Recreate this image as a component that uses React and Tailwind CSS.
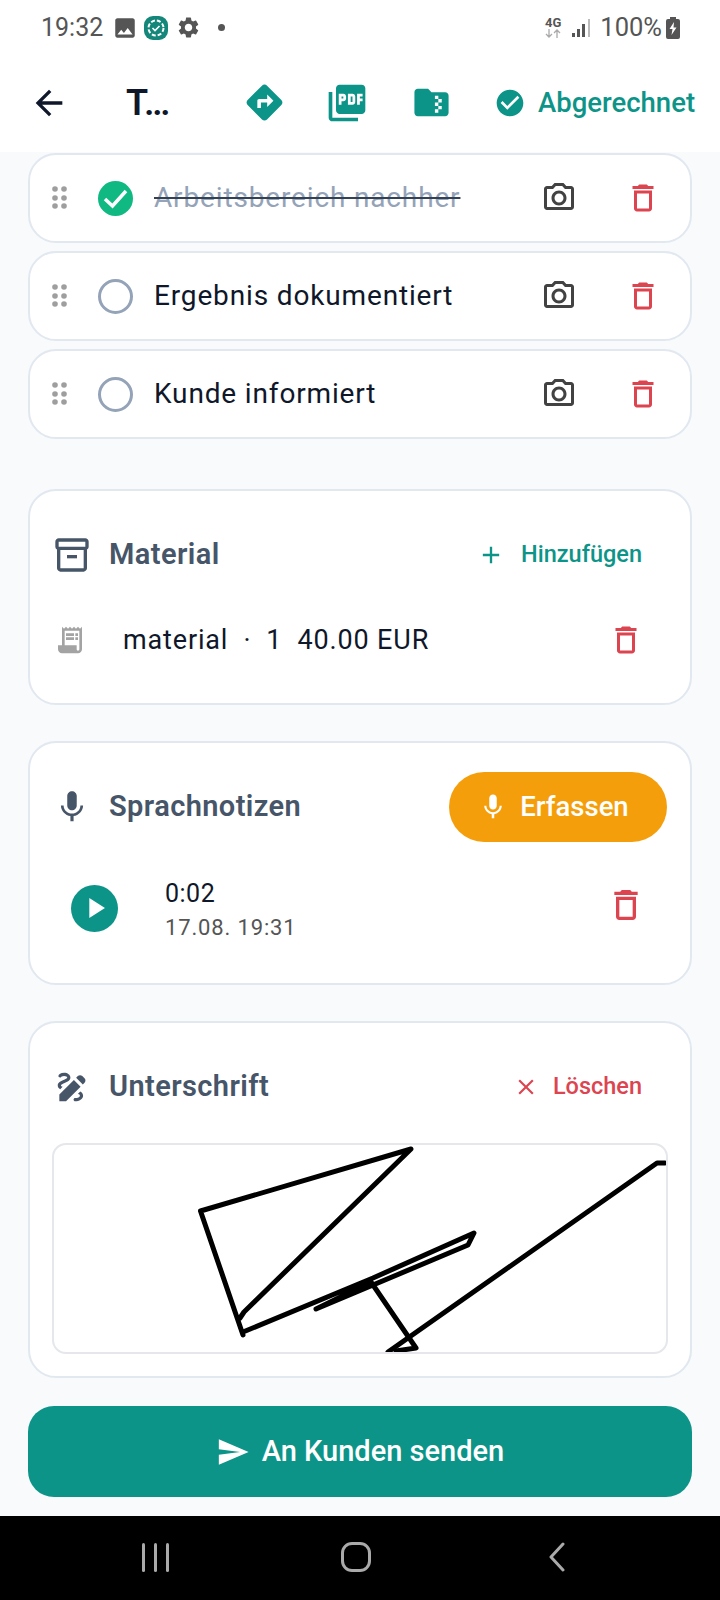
import {
  MdAdd,
  MdArrowBack,
  MdCheckCircle,
  MdClose,
  MdDeleteOutline,
  MdDirections,
  MdDraw,
  MdFolderZip,
  MdImage,
  MdMic,
  MdOutlineInventory2,
  MdOutlinePhotoCamera,
  MdPictureAsPdf,
  MdPlayArrow,
  MdReceiptLong,
  MdSend,
  MdSettings,
} from "react-icons/md";

function DragDots() {
  return (
    <svg width="16" height="24" viewBox="0 0 16 24" fill="#9e9e9e" className="shrink-0">
      {[3, 12, 20].map((y) => (
        <g key={y}>
          <circle cx="3" cy={y} r="2.8" />
          <circle cx="12" cy={y} r="2.8" />
        </g>
      ))}
    </svg>
  );
}

function TaskRow({ text, done }) {
  return (
    <div className="flex h-[90px] items-center rounded-[28px] border-2 border-[#e2e8f0] bg-white pl-[22px] pr-[29px]">
      <DragDots />
      {done ? (
        <div className="ml-[30px] flex h-[35px] w-[35px] items-center justify-center rounded-full bg-[#10b981]">
          <svg width="35" height="35" viewBox="0 0 35 35" fill="none" stroke="#fff" strokeWidth="3.500">
            <path d="M7 18L14.500 25L28 10" />
          </svg>
        </div>
      ) : (
        <div className="ml-[30px] h-[35px] w-[35px] rounded-full border-[3px] border-[#94a3b8]" />
      )}
      <span
        className={`ml-[21px] flex-1 text-[28px] tracking-[0.85px] ${
          done ? "text-[#94a3b8] line-through decoration-[#334155]" : "text-[#0f172a]"
        }`}
      >
        {text}
      </span>
      <MdOutlinePhotoCamera size={36} color="#424242" />
      <MdDeleteOutline size={36} color="#dc4450" className="ml-[48px]" />
    </div>
  );
}

function SectionTitle({ icon, children }) {
  return (
    <div className="flex items-center">
      <div className="flex w-[40px] justify-center">{icon}</div>
      <span className="ml-[17px] text-[29px] font-semibold tracking-[0.4px] text-[#475569]">{children}</span>
    </div>
  );
}

export default function App() {
  return (
    <div className="flex h-[1600px] w-[720px] flex-col overflow-hidden bg-[#f8fafc] font-['Roboto',sans-serif]">
      {/* Status bar */}
      <div className="flex h-[55px] items-center bg-white pl-[41px] pr-[40px] text-[#555]">
        <span className="text-[25px] leading-none">19:32</span>
        <MdImage size={26} className="ml-[9px]" />
        <svg width="26" height="26" viewBox="0 0 26 26" className="ml-[5px]">
          <rect x="1" y="1" width="24" height="24" rx="9" fill="#14877a" />
          <circle cx="13" cy="13" r="7.500" fill="none" stroke="#fff" strokeWidth="2" strokeDasharray="4 2" />
          <path d="M9.500 13l2.500 2.500 4.500-4.500" fill="none" stroke="#fff" strokeWidth="1.600" />
        </svg>
        <MdSettings size={25} className="ml-[7px]" />
        <span className="ml-[17px] h-[7px] w-[7px] rounded-full bg-[#555]" />
        <div className="flex-1" />
        <div className="flex flex-col items-center text-[#555]">
          <span className="text-[13px] font-bold leading-[12px]">4G</span>
          <svg width="16" height="9" viewBox="0 0 16 9" fill="none" stroke="#aaa" strokeWidth="1.300">
            <path d="M4 0v8M1 5l3 3 3-3M12 9V1M9 4l3-3 3 3" />
          </svg>
        </div>
        <svg width="20" height="20" viewBox="0 0 20 20" className="ml-[10px]">
          <rect x="1" y="15" width="3" height="4" fill="#555" />
          <rect x="6" y="11" width="3" height="8" fill="#555" />
          <rect x="11" y="6" width="3" height="13" fill="#555" />
          <rect x="17" y="1" width="2" height="18" fill="#bbb" />
        </svg>
        <span className="ml-[9px] text-[25.500px] leading-none">100%</span>
        <svg width="14" height="22" viewBox="0 0 14 22" className="ml-[4px]">
          <path d="M4 0h6v2h2a2 2 0 012 2v16a2 2 0 01-2 2H2a2 2 0 01-2-2V4a2 2 0 012-2h2z" fill="#555" />
          <path d="M8 5L3.500 12H6.500L5.500 18L10.500 10.500H7.500z" fill="#fff" />
        </svg>
      </div>

      {/* Header */}
      <div className="flex h-[97px] items-center bg-white pb-[2px] pl-[29px]">
        <MdArrowBack size={40} color="#0f172a" />
        <span className="ml-[57px] w-[94px] text-[36px] font-semibold leading-none text-[#0f172a]">T…</span>
        <MdDirections size={43} color="#0d9488" className="ml-[23px]" />
        <MdPictureAsPdf size={44} color="#0d9488" className="ml-[39px]" />
        <MdFolderZip size={41} color="#0d9488" className="ml-[42px]" />
        <MdCheckCircle size={32} color="#0d9488" className="ml-[42px]" />
        <span className="ml-[12px] text-[27.500px] font-medium leading-none text-[#0d9488]">Abgerechnet</span>
      </div>

      {/* Content */}
      <div className="flex min-h-0 flex-1 flex-col overflow-hidden px-[28px] pt-[1px]">
        <div className="flex flex-col gap-[8px]">
          <TaskRow text="Arbeitsbereich nachher" done />
          <TaskRow text="Ergebnis dokumentiert" />
          <TaskRow text="Kunde informiert" />
        </div>

        {/* Material */}
        <div className="mt-[50px] h-[216px] rounded-[28px] border-2 border-[#e2e8f0] bg-white pl-[22px] pr-[30px] pt-[44px]">
          <div className="flex h-[40px] items-center justify-between">
            <SectionTitle icon={<MdOutlineInventory2 size={40} color="#475569" />}>Material</SectionTitle>
            <div className="mr-[18px] flex items-center text-[23.500px] font-medium text-[#0d9488]">
              <MdAdd size={28} />
              <span className="ml-[16px]">Hinzufügen</span>
            </div>
          </div>
          <div className="mt-[45px] flex items-center">
            <MdReceiptLong size={32} color="#a3a3a3" className="ml-[2px]" />
            <span className="ml-[37px] flex-1 whitespace-pre text-[27px] tracking-[0.85px] text-[#0f172a]">
              material  ·  1  40.00 EUR
            </span>
            <MdDeleteOutline size={36} color="#dc4450" className="mr-[16px]" />
          </div>
        </div>

        {/* Voice notes */}
        <div className="mt-[36px] h-[244px] rounded-[28px] border-2 border-[#e2e8f0] bg-white px-[22px] pt-[29px]">
          <div className="flex h-[70px] items-center justify-between">
            <SectionTitle icon={<MdMic size={38} color="#475569" />}>Sprachnotizen</SectionTitle>
            <div className="mr-[1px] flex h-[70px] w-[218px] items-center justify-center rounded-full bg-[#f59e0b] pr-[9px] text-[27.500px] font-medium text-white">
              <MdMic size={30} />
              <span className="ml-[12px]">Erfassen</span>
            </div>
          </div>
          <div className="mt-[29px] flex items-center pl-[19px] pr-[22px]">
            <div className="flex h-[47px] w-[47px] items-center justify-center rounded-full bg-[#0d9488]">
              <MdPlayArrow size={34} color="#fff" />
            </div>
            <div className="ml-[47px] flex-1 pt-[6px]">
              <div className="text-[25px] leading-[34px] tracking-[0.5px] text-[#0f172a]">0:02</div>
              <div className="text-[22px] leading-[34px] tracking-[0.85px] text-[#555]">17.08. 19:31</div>
            </div>
            <MdDeleteOutline size={40} color="#dc4450" className="mt-[-6px]" />
          </div>
        </div>

        {/* Signature */}
        <div className="mt-[36px] h-[357px] rounded-[28px] border-2 border-[#e2e8f0] bg-white px-[22px] pt-[45px]">
          <div className="flex h-[38px] items-center justify-between">
            <SectionTitle icon={<MdDraw size={38} color="#475569" />}>Unterschrift</SectionTitle>
            <div className="mr-[26px] flex items-center text-[23.500px] font-medium text-[#dc4450]">
              <MdClose size={26} />
              <span className="ml-[14px]">Löschen</span>
            </div>
          </div>
          <div className="mt-[37px] h-[211px] overflow-hidden rounded-[14px] border-2 border-[#e5e7eb]">
            <svg width="612" height="207" viewBox="0 1 612 207" fill="none" stroke="#000" strokeWidth="5" strokeLinejoin="round" strokeLinecap="round">
              <path d="M146.500 67L357 5L190 168L186 174M146.500 67L189 191" />
              <path d="M189 188L319 134L420 89L414 101L262 165L317 138L362 204L342 207" />
              <path d="M334 208L603 19L611 19" />
            </svg>
          </div>
        </div>
      </div>

      {/* Send button */}
      <div className="bg-[#f8fafc] px-[28px] pb-[19px]">
        <div className="flex h-[91px] items-center justify-center rounded-[26px] bg-[#0d9488] text-[29px] font-medium text-white">
          <MdSend size={34} />
          <span className="ml-[12px]">An Kunden senden</span>
        </div>
      </div>

      {/* Nav bar */}
      <div className="flex h-[84px] items-center justify-between bg-black pb-[2px] pl-[142px] pr-[154px]">
        <div className="flex gap-[9px]">
          <span className="h-[29px] w-[3px] rounded-full bg-[#aaa]" />
          <span className="h-[29px] w-[3px] rounded-full bg-[#aaa]" />
          <span className="h-[29px] w-[3px] rounded-full bg-[#aaa]" />
        </div>
        <span className="mr-[6px] h-[30px] w-[30px] rounded-[11px] border-[3px] border-[#aaa]" />
        <svg width="18" height="30" viewBox="0 0 18 30" fill="none" stroke="#aaa" strokeWidth="3" strokeLinecap="round" strokeLinejoin="round">
          <path d="M15 2L3 15L15 28" />
        </svg>
      </div>
    </div>
  );
}
